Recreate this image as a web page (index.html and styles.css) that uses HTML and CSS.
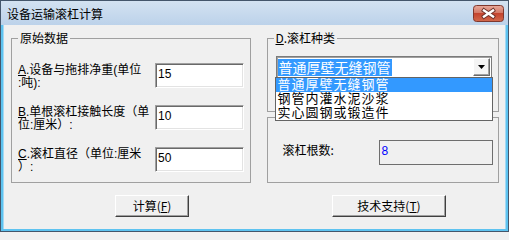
FILE: index.html
```html
<!DOCTYPE html>
<html lang="zh-CN">
<head>
<meta charset="utf-8">
<title>设备运输滚杠计算</title>
<link rel="stylesheet" href="styles.css">
</head>
<body>
<div class="window">
  <div class="titlebar">
    <span class="title">设备运输滚杠计算</span>
    <span class="close">
      <svg width="31" height="17" viewBox="0 0 31 17">
        <defs>
          <linearGradient id="cg" x1="0" y1="0" x2="0" y2="1">
            <stop offset="0" stop-color="#e8aa9c"/>
            <stop offset="0.45" stop-color="#d47a68"/>
            <stop offset="0.5" stop-color="#c4442f"/>
            <stop offset="1" stop-color="#d2694c"/>
          </linearGradient>
        </defs>
        <rect x="0.5" y="0.5" width="30" height="16" rx="3" fill="url(#cg)" stroke="#7e372d"/>
        <path d="M11 5.5 L20 11.5 M20 5.5 L11 11.5" stroke="#6b3028" stroke-width="4.2" stroke-linecap="square"/>
        <path d="M11 5.5 L20 11.5 M20 5.5 L11 11.5" stroke="#ffffff" stroke-width="2.4" stroke-linecap="square"/>
      </svg>
    </span>
  </div>
  <div class="client">
    <div class="columns">
      <fieldset class="group group-left">
        <legend>原始数据</legend>
        <div class="rows">
          <div class="row">
            <label class="lbl"><u>A</u>.设备与拖排净重(单位<br>:吨):</label>
            <input class="edit" value="15">
          </div>
          <div class="row">
            <label class="lbl"><u>B</u>.单根滚杠接触长度（单<br>位:厘米）:</label>
            <input class="edit" value="10">
          </div>
          <div class="row">
            <label class="lbl"><u>C</u>.滚杠直径（单位:厘米<br>）:</label>
            <input class="edit" value="50">
          </div>
        </div>
      </fieldset>
      <div class="right-col">
        <fieldset class="group group-d">
          <legend><u>D</u>.滚杠种类</legend>
          <div class="combo">
            <div class="combo-field"><span class="combo-sel">普通厚壁无缝钢管</span></div>
            <div class="combo-btn">
              <svg width="7" height="4" viewBox="0 0 7 4"><polygon points="0,0 7,0 3.5,4" fill="#000"/></svg>
            </div>
            <ul class="combo-list">
              <li class="item item-active">普通厚壁无缝钢管</li>
              <li class="item">钢管内灌水泥沙浆</li>
              <li class="item">实心圆钢或锻造件</li>
            </ul>
          </div>
        </fieldset>
        <fieldset class="group group-result">
          <div class="result-row">
            <span class="result-lbl">滚杠根数:</span>
            <div class="output">8</div>
          </div>
        </fieldset>
      </div>
    </div>
    <div class="buttons">
      <button class="btn btn-calc">计算(<u>F</u>)</button>
      <button class="btn btn-tech">技术支持(<u>T</u>)</button>
    </div>
  </div>
</div>
</body>
</html>
```

FILE: styles.css
```css
html, body {
  margin: 0;
  padding: 0;
  background: #f0f0f0;
}

.window {
  width: 509px;
  height: 232px;
  box-sizing: border-box;
  border: 1px solid #44566b;
  background: linear-gradient(to bottom, #d3e2f1 0, #bcd2ea 24px, #5ec3f0 24px, #5ec3f0 100%);
  display: flex;
  flex-direction: column;
  font-family: "Noto Sans CJK SC", "Liberation Sans", sans-serif;
  font-size: 12px;
  color: #000;
}

.titlebar {
  height: 24px;
  flex: 0 0 24px;
  display: flex;
  justify-content: space-between;
  align-items: flex-start;
  padding: 0 4px 0 6px;
}

.title {
  margin-top: 6px;
  line-height: 14px;
  font-size: 12px;
}

.close {
  margin-top: 4px;
  width: 31px;
  height: 17px;
  display: block;
}

.close svg {
  display: block;
}

.client {
  flex: 1;
  margin: 0 2px 2px 2px;
  background: #f0f0f0;
  padding: 6px 6px 0 7px;
  border-left: 1px solid #a6d9f2;
  border-right: 1px solid #a6d9f2;
}

.columns {
  display: flex;
  gap: 16px;
}

.group {
  margin: 0;
  padding: 0;
  min-width: 0;
  box-sizing: border-box;
  border: 1px solid #a0a0a0;
}

.group legend {
  padding: 0 2px;
  margin-left: 6px;
  line-height: 14px;
  font-size: 12px;
}

.group-left {
  width: 240px;
  height: 152px;
}

.rows {
  display: flex;
  flex-direction: column;
  gap: 15px;
  padding-top: 18px;
}

.row {
  display: flex;
  align-items: flex-start;
}

.lbl {
  width: 137px;
  padding-left: 6px;
  padding-top: 1px;
  line-height: 13px;
  white-space: nowrap;
  font-family: "Liberation Sans", "Noto Sans CJK SC", sans-serif;
  font-size: 12px;
}

.edit {
  width: 89px;
  height: 25px;
  box-sizing: border-box;
  margin: 0;
  padding: 0 2px 3px 2px;
  border: 1px solid;
  border-color: #a0a0a0 #ffffff #ffffff #a0a0a0;
  box-shadow: inset 1px 1px 0 #696969, inset -1px -1px 0 #e3e3e3;
  background: #fff;
  font-family: "Liberation Sans", sans-serif;
  font-size: 12px;
  color: #000;
  outline: none;
}

.right-col {
  width: 233px;
  display: flex;
  flex-direction: column;
  gap: 5px;
}

.group-d {
  height: 81px;
}

.group-result {
  height: 66px;
}

.combo {
  position: relative;
  margin: 11px 0 0 8px;
  width: 216px;
  height: 22px;
  box-sizing: border-box;
  border: 1px solid #7b7b7b;
  box-shadow: inset 1px 1px 0 #a0a0a0;
  padding: 1px;
  display: flex;
  align-items: center;
  background: #fff;
}

.combo-field {
  flex: 1;
  display: flex;
  align-items: center;
}

.combo-sel {
  display: inline-block;
  height: 17px;
  line-height: 17px;
  padding: 0 1px;
  font-size: 14px;
  background: #3399ff;
  color: #fff;
}

.combo-btn {
  width: 17px;
  height: 18px;
  box-sizing: border-box;
  border: 1px solid;
  border-color: #ffffff #696969 #696969 #ffffff;
  box-shadow: inset -1px -1px 0 #a0a0a0;
  background: #f4f4f4;
  display: flex;
  align-items: center;
  justify-content: center;
}

.combo-btn svg {
  display: block;
}

.combo-list {
  position: absolute;
  left: -2px;
  top: 20px;
  width: 218px;
  box-sizing: border-box;
  margin: 0;
  padding: 0;
  list-style: none;
  border: 1px solid #646464;
  background: #fff;
  z-index: 2;
}

.item {
  height: 14px;
  line-height: 14px;
  font-family: "Liberation Sans", "Noto Sans CJK SC", sans-serif;
  font-size: 13px;
  letter-spacing: 1px;
  padding-left: 2px;
  white-space: nowrap;
  color: #000;
}

.item-active {
  background: #3399ff;
  color: #fff;
}

.result-row {
  display: flex;
  align-items: flex-start;
  margin: 22px 0 0 15px;
}

.result-lbl {
  width: 96px;
  margin-top: 3px;
  line-height: 14px;
  font-size: 12px;
}

.output {
  width: 114px;
  height: 25px;
  box-sizing: border-box;
  border: 1px solid #6e6e6e;
  background: #f0f0f0;
  color: #0000ff;
  font-family: "Liberation Sans", sans-serif;
  font-size: 12px;
  line-height: 14px;
  padding: 3px 2px 0 2px;
}

.buttons {
  display: flex;
  margin-top: 12px;
  padding-left: 104px;
}

.btn {
  height: 22px;
  box-sizing: border-box;
  margin: 0;
  padding: 0;
  background: #f0f0f0;
  border: 1px solid;
  border-color: #ffffff #404040 #404040 #ffffff;
  box-shadow: inset -1px -1px 0 #a0a0a0;
  font-family: "Noto Sans CJK SC", "Liberation Sans", sans-serif;
  font-size: 12px;
  line-height: 18px;
  color: #000;
}

.btn-calc {
  width: 74px;
}

.btn-tech {
  width: 114px;
  margin-left: 143px;
}
```
